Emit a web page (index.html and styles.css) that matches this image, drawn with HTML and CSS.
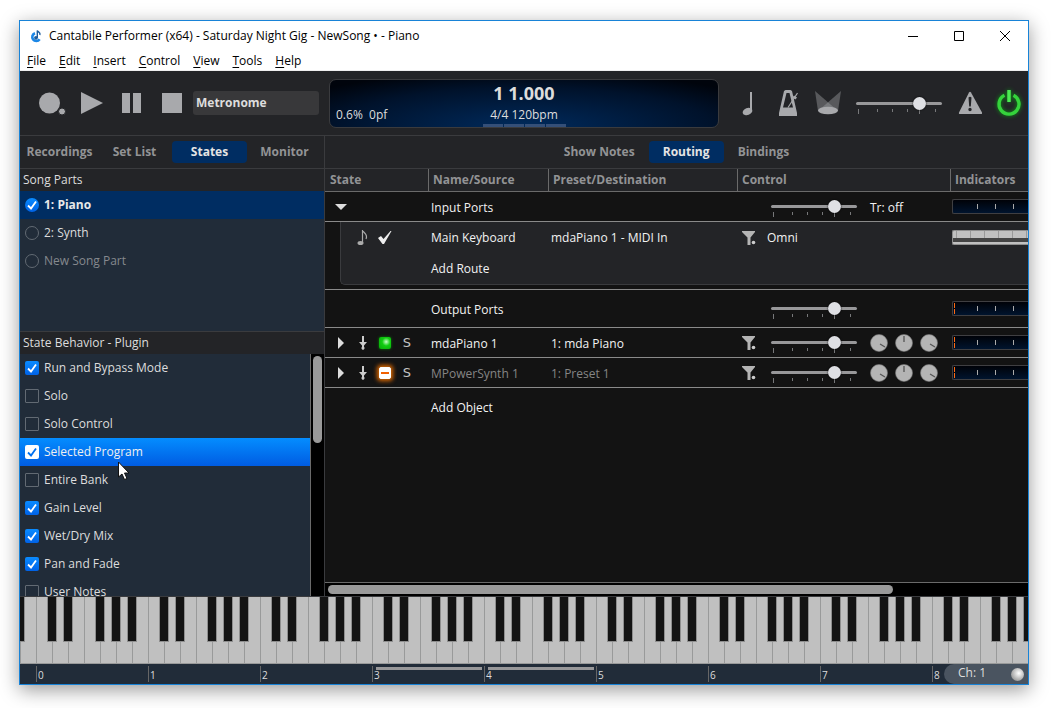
FILE: index.html
```html
<!DOCTYPE html>
<html lang="en">

<head>
    <meta charset="UTF-8">
    <title>Cantabile Performer</title>
    <link rel="stylesheet" href="styles.css">
</head>

<body>
    <!-- shared icons -->
    <svg class="defs" width="0" height="0">
        <symbol id="filter" viewBox="0 0 14 14">
            <path fill="#b4b4b4" d="M0 0h13v1L8.500 6.500V14H5.500V6.500L0 1z" />
            <circle fill="#ccc" cx="11.500" cy="11.500" r="1.800" />
        </symbol>
        <symbol id="insert" viewBox="0 0 8 14">
            <path fill="#ccc" d="M3 0h2v6h3L5 9.500V11a1.500 1.500 0 1 1-2 0V9.500L0 6h3z" />
        </symbol>
        <symbol id="knob-right" viewBox="0 0 18 18">
            <circle cx="9" cy="9" r="8.500" fill="#b4b4b4" stroke="#777" stroke-width=".6" />
            <path d="M10 10l5 3" stroke="#555" stroke-width="1.300" />
        </symbol>
        <symbol id="knob-mid" viewBox="0 0 18 18">
            <circle cx="9" cy="9" r="8.500" fill="#b4b4b4" stroke="#777" stroke-width=".6" />
            <path d="M9 2v6" stroke="#666" stroke-width="1.600" />
        </symbol>
    </svg>

    <div class="window">
        <header class="titlebar">
            <svg class="app-icon" width="12" height="13" viewBox="0 0 12 13">
                <path fill="none" stroke="#1c87e6" stroke-width="2.600" d="M5 3.200a4 4 0 1 0 4.600 6" />
                <circle cx="6" cy="7.800" r="1.900" fill="#1c5c9c" />
                <path fill="none" stroke="#1c5c9c" stroke-width="1.400" d="M7.300 8V.5c.5 1.600 3.500 1.600 2.600 4.500" />
            </svg>
            <span class="title">Cantabile Performer (x64) - Saturday Night Gig - NewSong • - Piano</span>
            <button class="win-btn" aria-label="Minimize"><svg width="10" height="10"><path d="M0 5.500h10" stroke="#000" /></svg></button>
            <button class="win-btn" aria-label="Maximize"><svg width="10" height="10"><path d="M.5.5h9v9h-9z" fill="none" stroke="#000" /></svg></button>
            <button class="win-btn" aria-label="Close"><svg width="10" height="10"><path d="M0 0l10 10M10 0L0 10" stroke="#000" /></svg></button>
        </header>
        <nav class="menubar">
            <a href="#"><u>F</u>ile</a>
            <a href="#"><u>E</u>dit</a>
            <a href="#"><u>I</u>nsert</a>
            <a href="#"><u>C</u>ontrol</a>
            <a href="#"><u>V</u>iew</a>
            <a href="#"><u>T</u>ools</a>
            <a href="#"><u>H</u>elp</a>
        </nav>

        <div class="toolbar">
            <div class="transport">
                <button aria-label="Record"><svg width="28" height="26"><circle cx="11.500" cy="13" r="10.500" /><circle cx="24" cy="21.500" r="3.500" stroke="#232427" stroke-width="1" /></svg></button>
                <button aria-label="Play"><svg width="28" height="26"><path d="M3 2l22 11L3 24z" /></svg></button>
                <button aria-label="Pause"><svg width="28" height="26"><path d="M4 3h8v20H4zM15 3h8v20h-8z" /></svg></button>
                <button aria-label="Stop"><svg width="28" height="26"><path d="M4 3h20v20H4z" /></svg></button>
                <select class="source" aria-label="Transport source">
                    <option>Metronome</option>
                </select>
            </div>
            <div class="lcd">
                <div class="lcd-load">0.6%&nbsp; 0pf</div>
                <div class="lcd-main">
                    <div class="lcd-time">1 1.000</div>
                    <div class="lcd-tempo">4/4 120bpm</div>
                    <div class="beats"><i></i><i></i><i></i><i></i></div>
                </div>
            </div>
            <div class="tools">
                <button aria-label="Tap tempo"><svg width="24" height="28"><path d="M12 3h2v20h-2z" /><ellipse cx="9.500" cy="22.500" rx="5" ry="3.500" transform="rotate(-20 9.500 22.500)" /></svg></button>
                <button aria-label="Metronome"><svg width="24" height="28"><path fill-rule="evenodd" d="M9.500 1h5l1.500 1 5 22v3H3v-3L8 2zM10.500 4L7 18.500h10L13.500 4z" /><path d="M12 18.500L21.500 4" stroke="#a8a9ac" stroke-width="1.200" /><path d="M18 6.500l3 2-1.500 2-3-2z" /></svg></button>
                <button aria-label="Live mode"><svg width="28" height="28"><path opacity=".4" d="M1 2l23 20H4z" /><path opacity=".4" d="M27 2L4 22h20z" /><ellipse cx="14" cy="21.500" rx="10" ry="3.800" /></svg></button>
                <input class="slider" type="range" value="78" aria-label="Master level">
                <button aria-label="Warnings"><svg width="26" height="28"><path d="M15 3.500l11 20q.5 1.500-1 1.500H4q-1.500 0-1-1.500L13 3.500q1-1.500 2 0z" /><path fill="#232427" d="M12.500 8.500q1.500-1.500 3 0l-.7 9h-1.600zM14 18.800a1.700 1.700 0 1 1 0 3.400 1.700 1.700 0 0 1 0-3.400z" /></svg></button>
                <button class="power" aria-label="Power"><svg width="26" height="28"><path fill="none" stroke="#35d33c" stroke-width="3.400" d="M8.500 6.200a10 10 0 1 0 9 0" /><path fill="none" stroke="#4bea52" stroke-width="3.500" d="M13 1v12" /></svg></button>
            </div>
        </div>

        <main class="main">
            <section class="side">
                <div class="tabs">
                    <button>Recordings</button>
                    <button>Set List</button>
                    <button class="active">States</button>
                    <button>Monitor</button>
                </div>
                <h2>Song Parts</h2>
                <div class="parts">
                    <label class="row current"><input type="radio" name="part" checked>1: Piano</label>
                    <label class="row"><input type="radio" name="part">2: Synth</label>
                    <label class="row muted"><input type="radio" name="part">New Song Part</label>
                </div>
                <h2 class="second">State Behavior - Plugin</h2>
                <div class="behavior">
                    <div class="options">
                        <label class="row"><input type="checkbox" checked>Run and Bypass Mode</label>
                        <label class="row"><input type="checkbox">Solo</label>
                        <label class="row"><input type="checkbox">Solo Control</label>
                        <label class="row selected"><input type="checkbox" checked>Selected Program
                            <svg class="pointer" width="13" height="20" viewBox="0 0 13 20"><path fill="#fff" stroke="#111" d="M.5 1v15l3.500-3 2.500 5.500 2.500-1L6.500 12H11z" /></svg>
                        </label>
                        <label class="row"><input type="checkbox">Entire Bank</label>
                        <label class="row"><input type="checkbox" checked>Gain Level</label>
                        <label class="row"><input type="checkbox" checked>Wet/Dry Mix</label>
                        <label class="row"><input type="checkbox" checked>Pan and Fade</label>
                        <label class="row"><input type="checkbox">User Notes</label>
                    </div>
                    <div class="vscroll"><div class="thumb"></div></div>
                </div>
            </section>

            <section class="content">
                <div class="tabs">
                    <button>Show Notes</button>
                    <button class="active">Routing</button>
                    <button>Bindings</button>
                </div>
                <div class="routing-wrap">
                    <table class="routing">
                        <thead>
                            <tr>
                                <th class="col-state">State</th>
                                <th class="col-name">Name/Source</th>
                                <th class="col-preset">Preset/Destination</th>
                                <th class="col-control">Control</th>
                                <th>Indicators</th>
                            </tr>
                        </thead>
                        <tbody>
                            <tr class="line">
                                <td><div class="state"><button aria-label="Collapse"><svg width="12" height="6"><path fill="#ddd" d="M0 0h12L6 6z" /></svg></button></div></td>
                                <td>Input Ports</td>
                                <td></td>
                                <td><div class="control"><span></span><input class="slider" type="range" value="78" aria-label="Input level"><span>Tr: off</span></div></td>
                                <td><div class="meter"><i></i><i></i><i></i><i></i></div></td>
                            </tr>
                            <tr class="route">
                                <td><div class="state nested"><button aria-label="MIDI"><svg width="12" height="17"><path fill="none" stroke="#aaa" stroke-width="1.200" d="M5.500 14V1c.5 3 6 4 3.500 9" /><ellipse cx="3.500" cy="14" rx="3" ry="2" fill="#aaa" /></svg></button><button aria-label="Enabled"><svg width="14" height="13"><path d="M0 7l3-2 2.500 3L12.500 0h1L6 13H4.500z" fill="#eee" /></svg></button></div></td>
                                <td>Main Keyboard</td>
                                <td>mdaPiano 1 - MIDI In</td>
                                <td><div class="control"><button aria-label="Filter"><svg width="14" height="14"><use href="#filter" /></svg></button><span>Omni</span></div></td>
                                <td><div class="mini-keys"><i></i><i></i><i></i><i></i><i></i><i></i></div></td>
                            </tr>
                            <tr class="route last">
                                <td><div class="state nested"></div></td>
                                <td>Add Route</td>
                                <td></td>
                                <td></td>
                                <td></td>
                            </tr>
                            <tr class="gap"><td colspan="5"></td></tr>
                            <tr class="line tall">
                                <td></td>
                                <td>Output Ports</td>
                                <td></td>
                                <td><div class="control"><span></span><input class="slider" type="range" value="78" aria-label="Output level"></div></td>
                                <td><div class="meter level"><i></i><i></i><i></i><i></i></div></td>
                            </tr>
                            <tr class="line">
                                <td><div class="state"><button aria-label="Expand"><svg width="6" height="12"><path fill="#ddd" d="M0 0v12l6-6z" /></svg></button><button aria-label="Insert"><svg width="8" height="14"><use href="#insert" /></svg></button><button aria-label="Run"><i class="led on"></i></button><button class="solo">S</button></div></td>
                                <td>mdaPiano 1</td>
                                <td>1: mda Piano</td>
                                <td><div class="control"><button aria-label="Filter"><svg width="14" height="14"><use href="#filter" /></svg></button><input class="slider" type="range" value="78" aria-label="mdaPiano gain"><div class="knobs"><button aria-label="Mix"><svg width="18" height="18"><use href="#knob-right" /></svg></button><button aria-label="Pan"><svg width="18" height="18"><use href="#knob-mid" /></svg></button><button aria-label="Fade"><svg width="18" height="18"><use href="#knob-right" /></svg></button></div></div></td>
                                <td><div class="meter level"><i></i><i></i><i></i><i></i></div></td>
                            </tr>
                            <tr class="line off">
                                <td><div class="state"><button aria-label="Expand"><svg width="6" height="12"><path fill="#ddd" d="M0 0v12l6-6z" /></svg></button><button aria-label="Insert"><svg width="8" height="14"><use href="#insert" /></svg></button><button aria-label="Bypass"><i class="led bypass"></i></button><button class="solo">S</button></div></td>
                                <td>MPowerSynth 1</td>
                                <td>1: Preset 1</td>
                                <td><div class="control"><button aria-label="Filter"><svg width="14" height="14"><use href="#filter" /></svg></button><input class="slider" type="range" value="78" aria-label="MPowerSynth gain"><div class="knobs"><button aria-label="Mix"><svg width="18" height="18"><use href="#knob-right" /></svg></button><button aria-label="Pan"><svg width="18" height="18"><use href="#knob-mid" /></svg></button><button aria-label="Fade"><svg width="18" height="18"><use href="#knob-right" /></svg></button></div></div></td>
                                <td><div class="meter level"><i></i><i></i><i></i><i></i></div></td>
                            </tr>
                            <tr class="add">
                                <td></td>
                                <td>Add Object</td>
                                <td></td>
                                <td></td>
                                <td></td>
                            </tr>
                        </tbody>
                    </table>
                </div>
                <div class="hscroll"><div class="thumb"></div></div>
            </section>
        </main>

        <footer>
            <svg class="keyboard" width="100%" height="67">
                <defs>
                    <pattern id="octave" x="16" width="112" height="67" patternUnits="userSpaceOnUse">
                        <path fill="#c0c0c0" d="M0 0h112v67H0z" />
                        <path stroke="#999a9a" d="M.5 0v67M16.500 0v67M32.500 0v67M48.500 0v67M64.500 0v67M80.500 0v67M96.500 0v67M0 66.500h112" />
                        <path fill="#8e8e8e" d="M11 0h10v45H11zM27 0h10v45H27zM59 0h10v45H59zM75 0h10v45H75zM91 0h10v45H91z" />
                        <path fill="#131313" d="M12 0h8v44h-8zM28 0h8v44h-8zM60 0h8v44h-8zM76 0h8v44h-8zM92 0h8v44h-8z" />
                    </pattern>
                </defs>
                <rect width="100%" height="67" fill="url(#octave)" />
            </svg>
            <div class="ruler">
                <ol>
                    <li>0</li>
                    <li>1</li>
                    <li>2</li>
                    <li class="zone">3</li>
                    <li class="zone">4</li>
                    <li>5</li>
                    <li>6</li>
                    <li>7</li>
                    <li>8</li>
                </ol>
                <button class="channel">Ch: 1<i></i></button>
            </div>
        </footer>
    </div>
</body>

</html>
```
FILE: styles.css
```css
* {
    box-sizing: border-box;
}

body {
    margin: 0;
    height: 100vh;
    padding: 20px 23px 23px 19px;
    background: #fff;
    color: #ddd;
    font: 12px/18px "Open Sans", "Noto Sans", sans-serif;
}

button {
    display: flex;
    align-items: center;
    justify-content: center;
    padding: 0;
    border: none;
    background: none;
    color: inherit;
    font: inherit;
}

svg {
    display: block;
    flex: none;
}

.defs {
    position: absolute;
}

.window {
    display: flex;
    flex-direction: column;
    height: 100%;
    border: 1px solid #1883d7;
    background: #131313;
    box-shadow: 0 5px 18px rgba(0, 0, 0, 0.4);
}

/* title and menu */
.titlebar {
    display: flex;
    align-items: center;
    height: 30px;
    padding-left: 10px;
    background: #fff;
    color: #000;
}

.title {
    flex: 1;
    margin-left: 7px;
}

.win-btn {
    width: 46px;
    height: 30px;
}

.menubar {
    display: flex;
    gap: 13px;
    height: 20px;
    padding-left: 7px;
    background: #fff;
    border-bottom: 1px solid #eee;
    line-height: 20px;
}

.menubar a {
    color: #000;
    text-decoration: none;
}

.menubar u {
    text-underline-offset: 2px;
}

/* toolbar */
.toolbar {
    display: grid;
    grid-template-columns: 1fr 390px 1fr;
    align-items: center;
    height: 65px;
    background: #232427;
    border-bottom: 1px solid #3a3b3e;
}

.toolbar svg {
    fill: #a8a9ac;
}

.transport {
    display: flex;
    align-items: center;
    gap: 12px;
    padding: 0 10px 0 18px;
}

.source {
    appearance: none;
    flex: 1;
    min-width: 0;
    height: 24px;
    margin-left: -5px;
    padding: 0 3px;
    border: none;
    border-radius: 3px;
    background: #38383a;
    color: #ddd;
    font: inherit;
    font-weight: bold;
}

.lcd {
    display: grid;
    grid-template-columns: 1fr auto 1fr;
    height: 49px;
    border: 1px solid #3a3b3e;
    border-radius: 7px;
    background: radial-gradient(ellipse 70% 120% at 50% 100%, #002a5c, #00122b 70%, #00040c);
    overflow: hidden;
}

.lcd-load {
    align-self: end;
    padding: 0 0 3px 6px;
}

.lcd-main {
    text-align: center;
}

.lcd-time {
    font-size: 18px;
    line-height: 26px;
    font-weight: bold;
}

.lcd-tempo {
    line-height: 18px;
}

.beats {
    display: flex;
    justify-content: center;
    gap: 1px;
}

.beats i {
    width: 20px;
    height: 3px;
    background: #344f78;
}

.tools {
    display: flex;
    align-items: center;
    justify-content: flex-end;
    gap: 14px;
    padding-right: 6px;
}

.power {
    filter: drop-shadow(0 0 2px #0a9a14);
}

/* the tick marks are painted under the track */
.slider {
    --tick: linear-gradient(#77787a, #77787a);
    appearance: none;
    width: 86px;
    height: 21px;
    margin: 0;
    background: var(--tick) 2px 16px / 1px 5px, var(--tick) 21px 16px / 1px 3px, var(--tick) 36px 16px / 1px 3px,
        var(--tick) 51px 16px / 1px 3px, var(--tick) 63px 16px / 1px 5px, var(--tick) 79px 16px / 1px 3px;
    background-repeat: no-repeat;
}

.slider::-webkit-slider-runnable-track {
    height: 3px;
    border-radius: 2px;
    background: #98989a;
}

.slider::-webkit-slider-thumb {
    appearance: none;
    width: 13px;
    height: 13px;
    margin-top: -5px;
    border-radius: 50%;
    background: #dfe0e4;
    box-shadow: 0 0 2px #000;
}

/* main area */
.main {
    display: flex;
    flex: 1;
    min-height: 0;
}

.side {
    display: flex;
    flex-direction: column;
    width: 305px;
    border-right: 1px solid #3a3b3e;
    background: #212c39;
}

.content {
    display: flex;
    flex-direction: column;
    flex: 1;
    min-width: 0;
}

.tabs {
    display: flex;
    flex: none;
    align-items: center;
    justify-content: center;
    height: 33px;
    background: #232427;
    border-bottom: 1px solid #3a3b3e;
}

.tabs button {
    min-width: 75px;
    height: 22px;
    border-radius: 4px;
    color: #929395;
    font-weight: bold;
}

.content .tabs button {
    padding: 0 14px;
}

.tabs .active {
    background: #002d62;
    color: #e4e4e4;
}

.side h2 {
    flex: none;
    height: 22px;
    margin: 0;
    padding: 0 3px;
    background: #232427;
    font-size: 12px;
    line-height: 22px;
    font-weight: normal;
}

.side .second {
    height: 23px;
    border-top: 1px solid #3a3b3e;
}

.parts {
    flex: none;
    height: 140px;
}

.row {
    display: flex;
    align-items: center;
    gap: 5px;
    height: 28px;
    padding-left: 5px;
}

.row input {
    appearance: none;
    width: 14px;
    height: 14px;
    margin: 0;
    border: 1px solid #626a73;
    border-radius: 1px;
}

.row input[type="radio"] {
    border-radius: 50%;
}

.row input:checked {
    border: none;
    border-radius: 2px;
    background: url("data:image/svg+xml,%3Csvg xmlns='http://www.w3.org/2000/svg' viewBox='0 0 14 14'%3E%3Cpath d='M3 7.500l3 3L11 3.500' fill='none' stroke='white' stroke-width='1.800'/%3E%3C/svg%3E"), linear-gradient(#0a8bff, #0062e6);
}

.row input[type="radio"]:checked {
    border-radius: 50%;
}

.current {
    background: #002d62;
    color: #e8e8e8;
    font-weight: bold;
}

.muted {
    color: #85898e;
}

.behavior {
    display: flex;
    flex: 1;
    min-height: 0;
}

.options {
    flex: 1;
    overflow: hidden;
}

.selected {
    position: relative;
    background: linear-gradient(#048dff, #005ce2);
    color: #f0f0f0;
}

.selected input:checked {
    background: url("data:image/svg+xml,%3Csvg xmlns='http://www.w3.org/2000/svg' viewBox='0 0 14 14'%3E%3Cpath d='M3 7.500l3 3L11 3.500' fill='none' stroke='%230070f0' stroke-width='1.800'/%3E%3C/svg%3E"), #fff;
}

.pointer {
    position: absolute;
    left: 98px;
    top: 23px;
    z-index: 1;
}

.vscroll {
    width: 14px;
    padding: 2px;
    border-left: 1px solid #6a6a6a;
    background: #000;
}

.vscroll .thumb {
    width: 9px;
    height: 87px;
    border-radius: 5px;
    background: #9a9a9a;
}

/* routing table */
.routing-wrap {
    flex: 1;
    min-height: 0;
    overflow: hidden;
}

.routing {
    width: 100%;
    table-layout: fixed;
    border-spacing: 0;
    color: #f2f2f2;
}

.routing th {
    height: 23px;
    padding: 0 4px;
    background: #232427;
    border-left: 1px solid #6a6a6a;
    border-bottom: 1px solid #6a6a6a;
    color: #929395;
    text-align: left;
    white-space: nowrap;
    overflow: hidden;
}

.routing th:first-child {
    padding-left: 5px;
    border-left: none;
}

.col-state {
    width: 103px;
}

.col-name {
    width: 120px;
}

.col-preset {
    width: 189px;
}

.col-control {
    width: 213px;
}

.routing td {
    height: 30px;
    padding: 0 0 0 3px;
    white-space: nowrap;
    overflow: hidden;
}

.routing td:first-child {
    padding: 0;
}

.routing td:nth-child(4) {
    padding-left: 1px;
}

.routing td:last-child {
    padding-left: 2px;
}

.line td,
.gap td {
    border-bottom: 1px solid #8a8a8a;
}

.routing .line td:nth-child(2),
.routing .line td:nth-child(3),
.line .control span {
    padding-top: 2px;
}

.routing .tall td {
    height: 38px;
}

.routing .gap td {
    height: 5px;
}

.routing .add td {
    height: 40px;
}

.route td {
    height: 31px;
    background: #232427;
}

.route td:first-child {
    background: #131313;
}

.routing .last td {
    height: 32px;
    border-bottom: 1px solid #3a3b3e;
}

.routing .last td:first-child {
    border-bottom: none;
}

.off {
    color: #858585;
}

.state {
    display: flex;
    align-items: center;
    padding-left: 5px;
}

.state button {
    width: 22px;
    height: 20px;
}

.nested {
    height: 31px;
    margin-left: 15px;
    padding-left: 11px;
    border-left: 1px solid #3a3b3e;
    background: #232427;
}

.last .nested {
    height: 32px;
    border-bottom: 1px solid #3a3b3e;
    border-bottom-left-radius: 5px;
}

.solo {
    color: #c4c4c4;
    font-family: "DejaVu Sans", sans-serif;
    font-size: 13px;
}

.led {
    width: 12px;
    height: 12px;
    border-radius: 2px;
}

.led.on {
    background: radial-gradient(circle at 60% 40%, #c8ffc8, #10cc10 40%, #08a808);
    box-shadow: 0 0 3px #0a7a0a;
}

.led.bypass {
    border: 1px solid #fff;
    background: linear-gradient(#f26000, #f26000) center / 8px 2px no-repeat #fff;
    box-shadow: 0 0 4px 2px #e06a00;
}

.control {
    display: grid;
    grid-template-columns: 29px 103px auto;
    align-items: center;
}

.control > button {
    width: 22px;
    height: 20px;
}

.control .slider {
    margin-left: 4px;
}

.knobs {
    display: flex;
    gap: 7px;
}

.meter,
.mini-keys {
    display: flex;
    align-items: center;
    gap: 17px;
    height: 15px;
    padding-left: 24px;
    border: 1px solid #3f3f42;
    border-right: none;
    border-radius: 2px 0 0 2px;
    background: linear-gradient(#000208, #00142e);
    overflow: hidden;
}

.meter i {
    flex: none;
    width: 1px;
    height: 5px;
    background: #aaa;
}

.meter i:last-child {
    margin-left: -3px;
    height: 11px;
}

.meter.level {
    background: linear-gradient(#ff6a10 5px, #00060f 5px 6px, #ff6a10 6px) 1px 1px / 1px 11px no-repeat, linear-gradient(#000208, #00142e);
}

.mini-keys {
    gap: 13px;
    padding-left: 3px;
    border-color: #8e8e8e;
    background: linear-gradient(#c0c0c0 7px, #444 7px 11px, #c0c0c0 11px);
}

.mini-keys i {
    width: 1px;
    height: 7px;
    align-self: flex-start;
    background: #999;
}

.hscroll {
    height: 14px;
    padding: 2px 3px;
    border-top: 1px solid #6a6a6a;
    background: #000;
}

.hscroll .thumb {
    width: 81%;
    height: 9px;
    border-radius: 5px;
    background: #9a9a9a;
}

/* keyboard */
footer {
    border-top: 1px solid #3a3b3e;
}

.ruler {
    display: flex;
    height: 20px;
    background: #212c39;
}

.ruler ol {
    display: flex;
    flex: 1;
    margin: 0;
    padding: 2px 0 2px 16px;
    list-style: none;
    overflow: hidden;
    font-size: 10px;
}

.ruler li {
    flex: none;
    width: 112px;
    padding-left: 1px;
    border-left: 1px solid #666;
    line-height: 19px;
}

.zone {
    background: linear-gradient(#98989a, #98989a) 3px 1px / 106px 3px no-repeat;
}

.channel {
    width: 84px;
    padding: 0 4px 2px 14px;
    justify-content: space-between;
    border-radius: 10px 0 0 10px;
    background: #4a5460;
}

.channel i {
    width: 13px;
    height: 13px;
    margin-top: 2px;
    border-radius: 50%;
    background: radial-gradient(circle at 60% 40%, #fff, #bbb 50%, #777);
}
```
